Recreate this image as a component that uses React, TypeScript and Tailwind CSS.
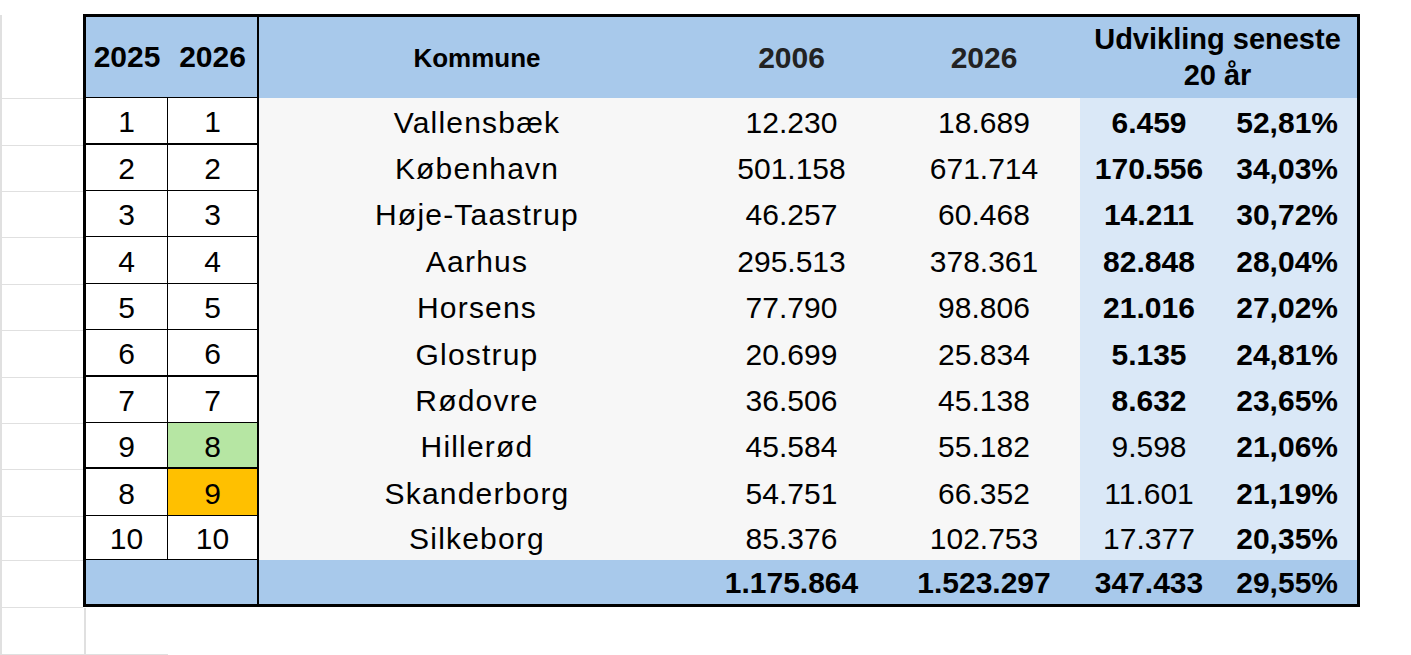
import React from "react";

const rows = [
  { a: "1", b: "1", name: "Vallensbæk", y06: "12.230", y26: "18.689", diff: "6.459", pct: "52,81%", bold: true, h: "h-[47px]", line: "border-b-2", gl: "h-[47px]" },
  { a: "2", b: "2", name: "København", y06: "501.158", y26: "671.714", diff: "170.556", pct: "34,03%", bold: true, h: "h-[46px]", line: "border-b", gl: "h-[46px]" },
  { a: "3", b: "3", name: "Høje-Taastrup", y06: "46.257", y26: "60.468", diff: "14.211", pct: "30,72%", bold: true, h: "h-[46px]", line: "border-b", gl: "h-[46px]" },
  { a: "4", b: "4", name: "Aarhus", y06: "295.513", y26: "378.361", diff: "82.848", pct: "28,04%", bold: true, h: "h-[47px]", line: "border-b", gl: "h-[47px]" },
  { a: "5", b: "5", name: "Horsens", y06: "77.790", y26: "98.806", diff: "21.016", pct: "27,02%", bold: true, h: "h-[46px]", line: "border-b", gl: "h-[46px]" },
  { a: "6", b: "6", name: "Glostrup", y06: "20.699", y26: "25.834", diff: "5.135", pct: "24,81%", bold: true, h: "h-[47px]", line: "border-b-2", gl: "h-[47px]" },
  { a: "7", b: "7", name: "Rødovre", y06: "36.506", y26: "45.138", diff: "8.632", pct: "23,65%", bold: true, h: "h-[46px]", line: "border-b", gl: "h-[46px]" },
  { a: "9", b: "8", name: "Hillerød", y06: "45.584", y26: "55.182", diff: "9.598", pct: "21,06%", bold: false, h: "h-[46px]", line: "border-b-2", gl: "h-[46px]", fill: "bg-[#b6e6a3]" },
  { a: "8", b: "9", name: "Skanderborg", y06: "54.751", y26: "66.352", diff: "11.601", pct: "21,19%", bold: false, h: "h-[47px]", line: "border-b", gl: "h-[47px]", fill: "bg-[#ffc000]" },
  { a: "10", b: "10", name: "Silkeborg", y06: "85.376", y26: "102.753", diff: "17.377", pct: "20,35%", bold: false, h: "h-[44px]", line: "border-b", gl: "h-[44px]" },
];

export default function App() {
  return (
    <div className="w-[1411px] h-[655px] bg-white overflow-hidden text-black leading-none font-['Liberation_Sans',Arial,sans-serif]">
      <div className="flex items-start">
        {/* spreadsheet gridlines left of the table */}
        <div className="w-[83px] mt-[15px] flex flex-col">
          <div className="h-[84px] border-l-2 border-b border-[#e0e0e0]" />
          {rows.map((r) => (
            <div key={r.name} className={`${r.gl} border-l-2 border-b border-[#e0e0e0]`} />
          ))}
          <div className="h-[47px] border-l-2 border-b border-[#e0e0e0]" />
        </div>

        <div className="mt-[14px] w-[1277px] border-[3px] border-black">
          {/* header */}
          <div className="grid grid-cols-[82px_91px_436px_193px_192px_277px] h-[81px] bg-[#a8c9eb] font-bold">
            <div className="flex items-center justify-center text-[30px] border-b border-black">2025</div>
            <div className="flex items-center justify-center text-[30px] border-b border-r-2 border-black">2026</div>
            <div className="flex items-center justify-center text-[26px]">Kommune</div>
            <div className="flex items-center justify-center text-[30px] text-[#222]">2006</div>
            <div className="flex items-center justify-center text-[30px] text-[#222]">2026</div>
            <div className="flex flex-col items-center justify-center text-[29px] leading-[36px] pr-[2px] pb-[2px]">
              <span>Udvikling seneste</span>
              <span>20 år</span>
            </div>
          </div>

          {/* data rows */}
          {rows.map((r) => (
            <div
              key={r.name}
              className={`grid grid-cols-[82px_91px_436px_193px_192px_138px_139px] ${r.h} text-[30px]`}
            >
              <div className={`flex items-center justify-center pt-[3px] bg-white border-r border-black ${r.line}`}>{r.a}</div>
              <div className={`flex items-center justify-center pt-[3px] border-r-2 border-black ${r.line} ${r.fill ?? "bg-white"}`}>{r.b}</div>
              <div className="flex items-center justify-center pt-[2px] bg-[#f7f7f7] tracking-[1.2px]">{r.name}</div>
              <div className="flex items-center justify-center pt-[2px] bg-[#f7f7f7]">{r.y06}</div>
              <div className="flex items-center justify-center pt-[2px] bg-[#f7f7f7]">{r.y26}</div>
              <div className={`flex items-center justify-center pt-[2px] bg-[#dae8f7] ${r.bold ? "font-bold" : ""}`}>{r.diff}</div>
              <div className="flex items-center justify-end pt-[2px] pr-[19px] bg-[#dae8f7] font-bold">{r.pct}</div>
            </div>
          ))}

          {/* totals */}
          <div className="grid grid-cols-[82px_91px_436px_193px_192px_138px_139px] h-[44px] bg-[#a8c9eb] text-[30px] font-bold">
            <div />
            <div className="border-r-2 border-black" />
            <div />
            <div className="flex items-center justify-center pt-[2px]">1.175.864</div>
            <div className="flex items-center justify-center pt-[2px]">1.523.297</div>
            <div className="flex items-center justify-center pt-[2px]">347.433</div>
            <div className="flex items-center justify-end pt-[2px] pr-[19px]">29,55%</div>
          </div>
        </div>
      </div>

      {/* gridlines below the table */}
      <div className="flex">
        <div className="w-[86px] h-[47px] border-l-2 border-r-2 border-b border-[#e0e0e0]" />
        <div className="w-[82px] h-[47px] border-b border-[#e0e0e0]" />
      </div>
    </div>
  );
}
